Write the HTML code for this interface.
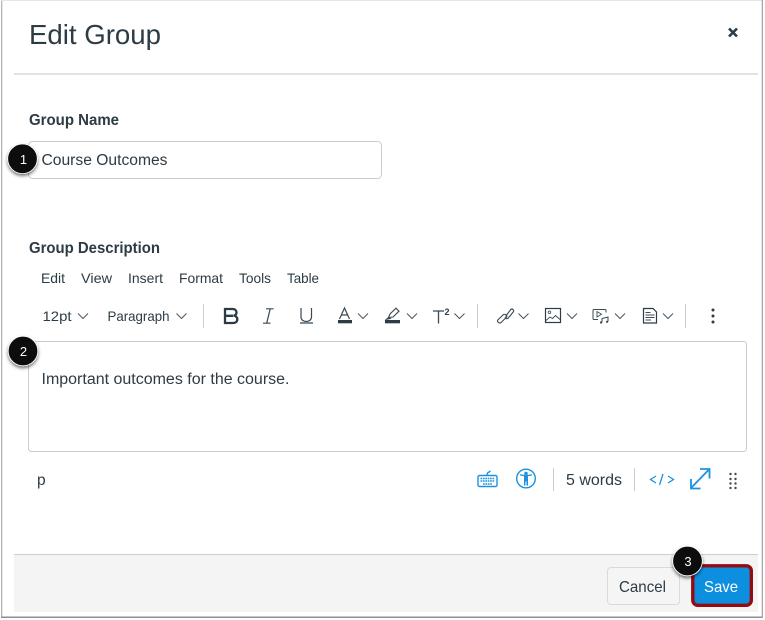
<!DOCTYPE html>
<html><head><meta charset="utf-8"><style>
html,body{margin:0;padding:0;background:#fff;width:765px;height:620px;overflow:hidden}
svg{display:block;position:absolute;left:0;top:0;filter:blur(.3px)}
text{font-family:"Liberation Sans",sans-serif;fill:#2d3b45}
</style></head><body>
<svg width="765" height="620" viewBox="0 0 765 620" xmlns="http://www.w3.org/2000/svg">
<defs><filter id="s" x="-40%" y="-40%" width="180%" height="180%"><feDropShadow dx="0" dy="2" stdDeviation="1.5" flood-color="#000" flood-opacity=".55"/></filter></defs>
<rect x="0" y="0" width="765" height="620" fill="#fff"/>
<rect x="1" y="0" width="1.300" height="618" fill="#b5b5b5"/>
<rect x="1" y="0" width="762" height="1" fill="#e6e6e6"/>
<rect x="1" y="616.500" width="762" height="1.500" fill="#8f8f8f"/>
<rect x="761.700" y="0" width="1.300" height="618" fill="#a8a8a8"/>

<text x="29" y="44" font-size="28" textLength="132" lengthAdjust="spacingAndGlyphs" fill="#3a4954">Edit Group</text>
<path d="M729 28.500l8 8M737 28.500l-8 8" stroke="#2d3b45" stroke-width="2.600" fill="none"/>
<rect x="14" y="73" width="744" height="2" fill="#dfe3e5"/>

<text x="29" y="125" font-size="16" font-weight="700" textLength="90" lengthAdjust="spacingAndGlyphs">Group Name</text>
<rect x="28.500" y="141.500" width="353" height="37" rx="4" fill="#fff" stroke="#c7cdd1"/>
<text x="41.500" y="165" font-size="15.500" textLength="126" lengthAdjust="spacingAndGlyphs">Course Outcomes</text>

<text x="29" y="253" font-size="16" font-weight="700" textLength="131" lengthAdjust="spacingAndGlyphs">Group Description</text>
<g font-size="14">
<text x="41" y="283" textLength="24" lengthAdjust="spacingAndGlyphs">Edit</text>
<text x="81" y="283" textLength="31" lengthAdjust="spacingAndGlyphs">View</text>
<text x="128" y="283" textLength="35" lengthAdjust="spacingAndGlyphs">Insert</text>
<text x="179" y="283" textLength="44" lengthAdjust="spacingAndGlyphs">Format</text>
<text x="239" y="283" textLength="32" lengthAdjust="spacingAndGlyphs">Tools</text>
<text x="287" y="283" textLength="32" lengthAdjust="spacingAndGlyphs">Table</text>
<text x="42.500" y="321" textLength="29" lengthAdjust="spacingAndGlyphs">12pt</text>
<text x="107.500" y="321" textLength="62" lengthAdjust="spacingAndGlyphs">Paragraph</text>
</g>
<g fill="none" stroke="#4a5760" stroke-width="1">
<path d="M78 313.500l5 5 5-5"/>
<path d="M176.500 313.500l5 5 5-5"/>
<path d="M358 313.500l5 5 5-5"/>
<path d="M407 313.500l5 5 5-5"/>
<path d="M454.500 313.500l5 5 5-5"/>
<path d="M518.500 313.500l5 5 5-5"/>
<path d="M567 313.500l5 5 5-5"/>
<path d="M615 313.500l5 5 5-5"/>
<path d="M663 313.500l5 5 5-5"/>
</g>
<g fill="#c7cdd1">
<rect x="203" y="304" width="1" height="24"/>
<rect x="477" y="304" width="1" height="24"/>
<rect x="685" y="304" width="1" height="24"/>
<rect x="553" y="468" width="1" height="23"/>
<rect x="634" y="468" width="1" height="23"/>
</g>
<!-- B I U -->
<path d="M225 309h7.500c2.600 0 4 1.400 4 3.400 0 1.800-1.100 3-3 3.200 2.300.2 3.800 1.500 3.800 3.600 0 2.300-1.700 3.800-4.400 3.800H225zM225 315.800h8" fill="none" stroke="#2d3b45" stroke-width="2.300"/>
<path d="M266 308.800h7.500M263 323.200h7.500M270.200 308.800l-3.500 14.400" fill="none" stroke="#3a4954" stroke-width="1.200"/>
<path d="M301 308v9c0 6 10.500 6 10.500 0v-9M300 323h13" fill="none" stroke="#3a4954" stroke-width="1.200"/>
<!-- A colour -->
<path d="M339.500 319l5-11 5 11M341.300 315h6.400" fill="none" stroke="#3a4954" stroke-width="1.200"/>
<rect x="338" y="320" width="14" height="3.300" fill="#2d3b45"/>
<!-- highlight -->
<path d="M388.500 317.500l1.500-3.500 6-5.800 3 3-6 5.800zM386.500 319.300l2-1.800 1.700 1z" fill="none" stroke="#3a4954" stroke-width="1.100"/>
<rect x="385" y="320" width="15" height="3.300" fill="#2d3b45"/>
<!-- T2 -->
<path d="M433 311h11M438.500 311V323.500" fill="none" stroke="#3a4954" stroke-width="1.300"/>
<text x="444.500" y="315" font-size="9" font-weight="700">2</text>
<!-- link -->
<path d="M503.500 314.500l-5.500 5.200c-1.500 1.800 1.300 4.300 3 2.900l5.300-5.200c1.400-1.700-.7-3.800-2.800-2.900zM505.500 316.500l5.300-7c1.300-1.300 3.700.6 2.500 2.400l-5.200 6.300c-1.300 1-2.800.4-3-.9" fill="none" stroke="#3a4954" stroke-width="1.100"/>
<!-- image -->
<rect x="545.500" y="308.500" width="15" height="14" fill="none" stroke="#2d3b45" stroke-width="1.200"/>
<circle cx="549.500" cy="312.300" r="1.300" fill="none" stroke="#3a4954" stroke-width=".8"/>
<path d="M546 320.500l4-3.500 2.500 1.500 3-3 4.500 4" fill="none" stroke="#3a4954" stroke-width=".9"/>
<!-- media -->
<path d="M598 319.500h-4c-.8 0-1-.5-1-1v-8c0-.6.4-1 1-1h11c.6 0 1 .4 1 1v2" fill="none" stroke="#3a4954" stroke-width="1"/>
<path d="M597 311.500v5.500l4.500-2.700z" fill="none" stroke="#3a4954" stroke-width=".9"/>
<path d="M602 322.500v-4l6-1.500v4.500" fill="none" stroke="#3a4954" stroke-width="1"/>
<circle cx="601" cy="322.500" r="1.100" fill="#3a4954"/><circle cx="607" cy="321.800" r="1.100" fill="#3a4954"/>
<!-- document -->
<path d="M643.500 308.500h9.500l3.500 3.500v11h-13z" fill="none" stroke="#2d3b45" stroke-width="1.200"/>
<path d="M645.500 312.500h5M645.500 315h9M645.500 317.500h9M645.500 320h5.500" stroke="#3a4954" stroke-width="1"/>
<!-- kebab -->
<g fill="#2d3b45"><circle cx="713" cy="310" r="1.500"/><circle cx="713" cy="316" r="1.500"/><circle cx="713" cy="322" r="1.500"/></g>

<rect x="28.500" y="341.500" width="718" height="110" rx="3" fill="#fff" stroke="#c7cdd1"/>
<text x="41.500" y="384" font-size="15.500" textLength="248" lengthAdjust="spacingAndGlyphs">Important outcomes for the course.</text>

<text x="37" y="485" font-size="15.500">p</text>
<!-- keyboard -->
<g fill="none" stroke="#1c92e0" stroke-width="1.400">
<rect x="478" y="475.500" width="19" height="11" rx="1.500"/>
<path d="M487 475l.5-2 3-2"/>
</g>
<path d="M480.500 478.500h14M480.500 481h14M483 484h9" stroke="#1c92e0" stroke-width="1.500" stroke-dasharray="1.700 .7" fill="none"/>
<!-- a11y -->
<circle cx="526" cy="478.500" r="9.300" fill="none" stroke="#1c92e0" stroke-width="1.400"/>
<circle cx="526" cy="473.500" r="1.800" fill="#1c92e0"/>
<path d="M520 475.500l4 .8v9.200h1.500v-4h1v4h1.500v-9.200l4-.8v-1.200l-6 .8-6-.8z" fill="#1c92e0"/>
<text x="566" y="485" font-size="15.500" textLength="56" lengthAdjust="spacingAndGlyphs">5 words</text>
<!-- code -->
<path d="M656 476l-5.500 3.500 5.500 3.500M659.500 485l3.500-11M668 476l5.500 3.500-5.500 3.500" fill="none" stroke="#1c92e0" stroke-width="1.300"/>
<!-- expand -->
<path d="M691.500 487.500l17.500-18M700 469h9.500v9.500M691 479v9.500h9.500" fill="none" stroke="#1c92e0" stroke-width="1.800"/>
<!-- grip -->
<g fill="#3f4c56">
<circle cx="730.500" cy="474" r="1.200"/><circle cx="735.500" cy="474" r="1.200"/>
<circle cx="730.500" cy="479" r="1.200"/><circle cx="735.500" cy="479" r="1.200"/>
<circle cx="730.500" cy="483.500" r="1.200"/><circle cx="735.500" cy="483.500" r="1.200"/>
<circle cx="730.500" cy="488" r="1.200"/><circle cx="735.500" cy="488" r="1.200"/>
</g>

<!-- footer -->
<rect x="14" y="555" width="744" height="57" fill="#f4f4f4"/>
<rect x="14" y="554" width="744" height="1" fill="#c7cdd1"/>
<rect x="607.500" y="567.500" width="72" height="37" rx="3.500" fill="#f5f5f5" stroke="#d7dadc"/>
<text x="619" y="592" font-size="16" textLength="47" lengthAdjust="spacingAndGlyphs">Cancel</text>
<rect x="692.800" y="565.800" width="58.500" height="39.500" rx="5" fill="#0d8fe0" stroke="#930c12" stroke-width="3.400"/>
<text x="704" y="592" font-size="16" textLength="34" lengthAdjust="spacingAndGlyphs" style="fill:#fff">Save</text>

<!-- callouts -->
<g filter="url(#s)">
<circle cx="22.500" cy="158.800" r="14.800" fill="#0b0b0b" stroke="#fff" stroke-width=".8"/>
<circle cx="23" cy="351" r="14.800" fill="#0b0b0b" stroke="#fff" stroke-width=".8"/>
<circle cx="687.500" cy="561" r="14.800" fill="#0b0b0b" stroke="#fff" stroke-width=".8"/>
</g>
<g font-size="13" text-anchor="middle">
<text x="23.500" y="164" style="fill:#fff">1</text>
<text x="23.500" y="356" style="fill:#fff">2</text>
<text x="688" y="566" style="fill:#fff">3</text>
</g>
</svg>
</body></html>
